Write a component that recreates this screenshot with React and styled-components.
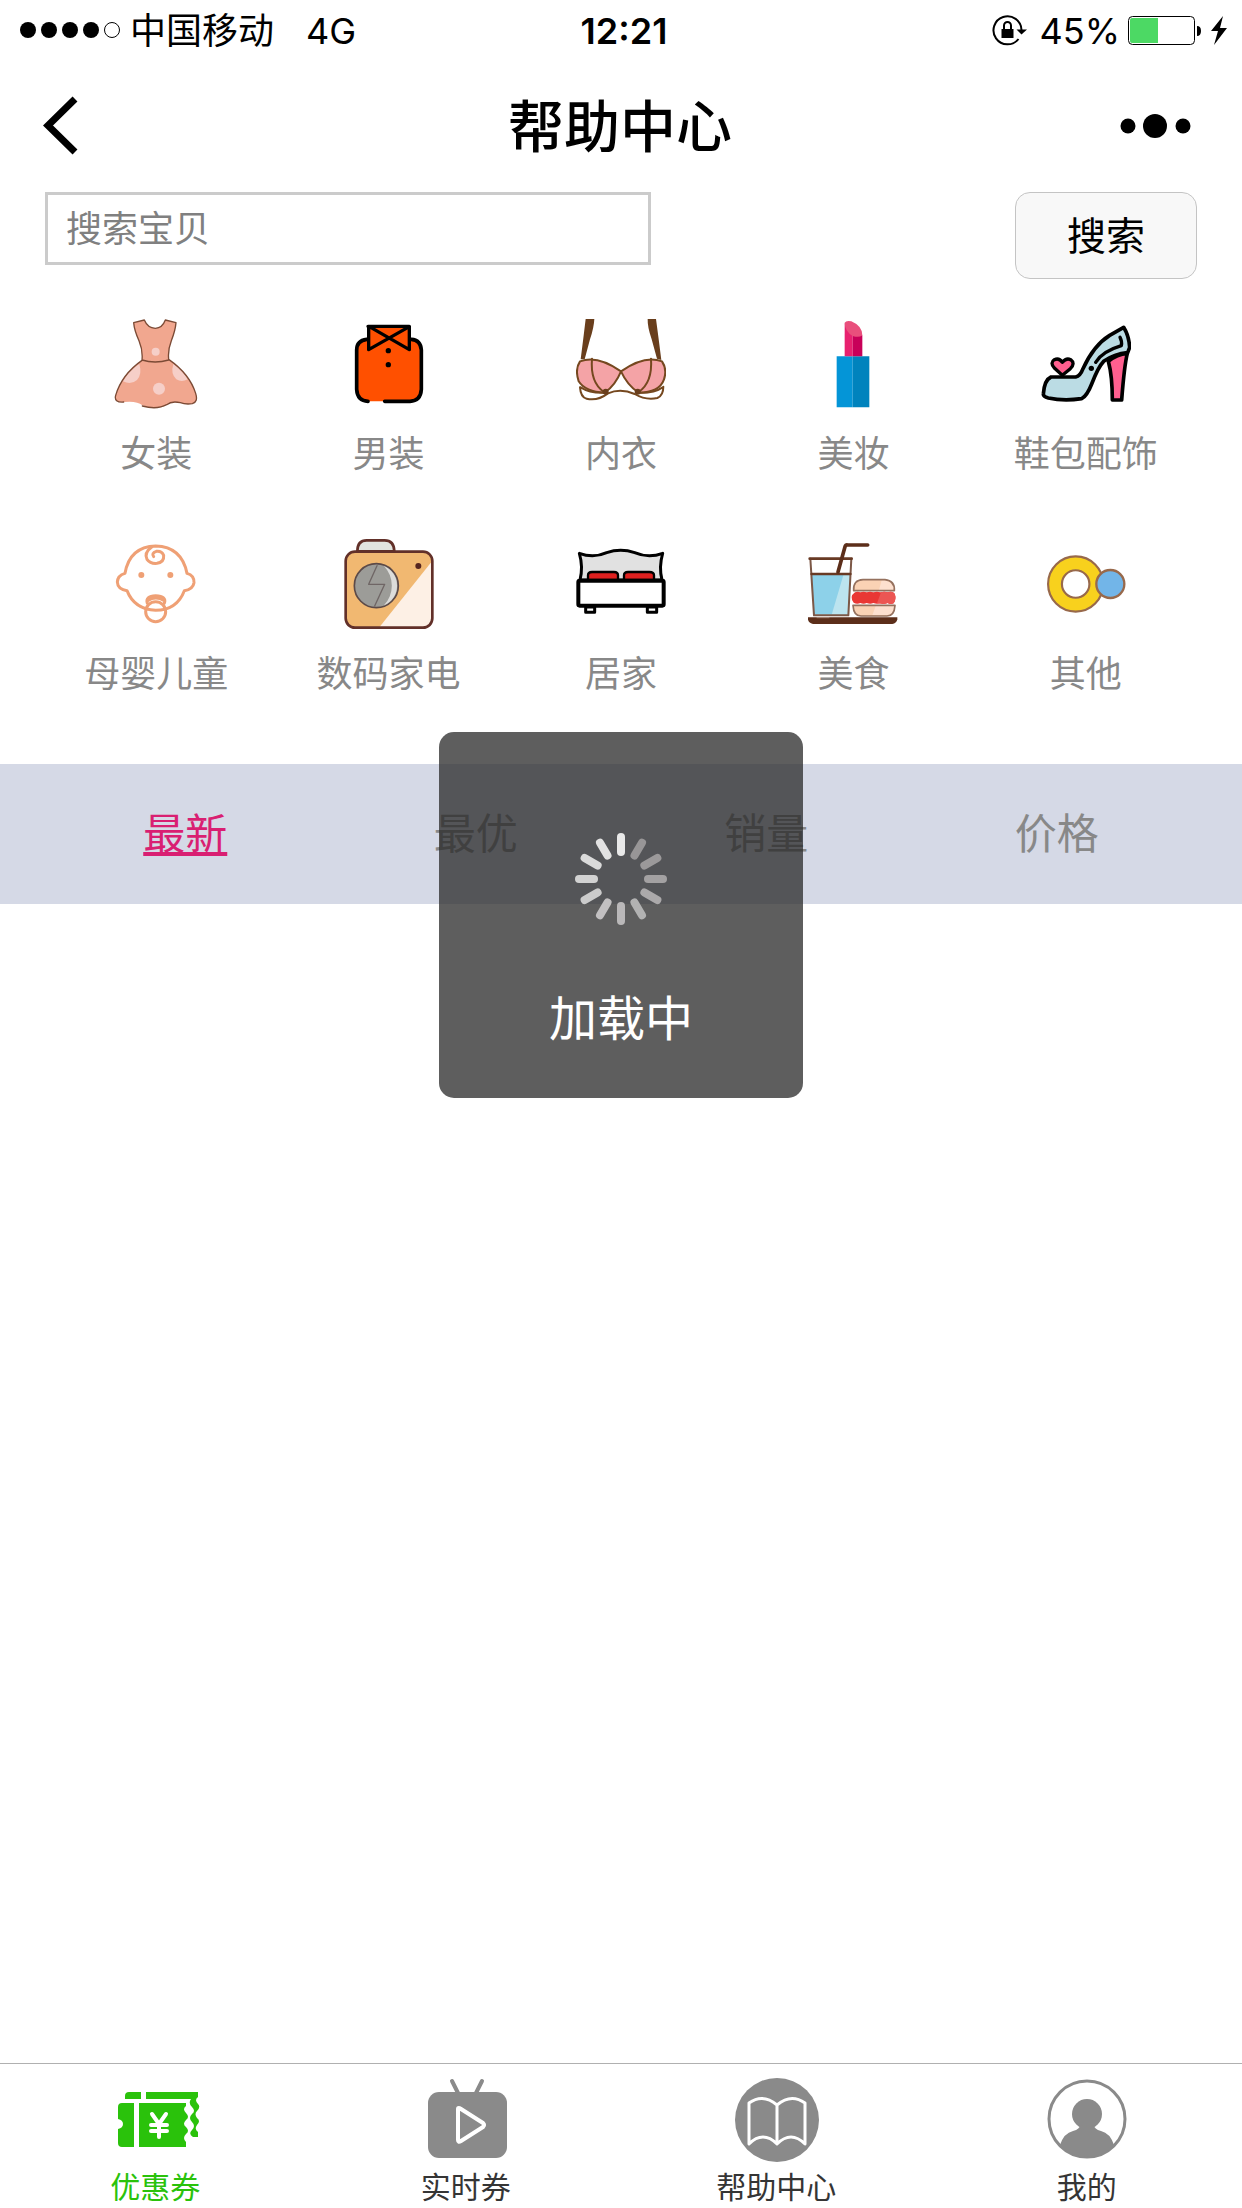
import { useState } from 'react'
import styled, { createGlobalStyle } from 'styled-components'

const GlobalStyle = createGlobalStyle`
  * {
    box-sizing: border-box;
  }
  body {
    margin: 0;
    background: #fff;
    font-family: Inter, "Noto Sans CJK SC", sans-serif;
    font-weight: 400;
    color: #000;
  }
  button, input {
    font-family: inherit;
    font-weight: inherit;
  }
`
const Page = styled.div`
  display: flex;
  flex-direction: column;
  min-height: 100vh;
`
const StatusBar = styled.header`
  display: grid;
  grid-template-columns: 1fr auto 1fr;
  align-items: center;
  height: 62px;
  padding: 0 14px 0 20px;
  font-size: 36px;
  line-height: 60px;
`
const StatusSide = styled.div`
  display: flex;
  align-items: center;
  justify-content: ${({ $end }) => ($end ? 'flex-end' : 'flex-start')};
  gap: 8px;
`
const Carrier = styled.span`
  margin-right: 24px;
`
const Time = styled.time`
  font-weight: 600;
`
const NavBar = styled.nav`
  display: grid;
  grid-template-columns: 1fr auto 1fr;
  align-items: center;
  height: 130px;
  padding: 0 44px 0 42px;
`
const NavButton = styled.button`
  display: flex;
  justify-self: ${({ $end }) => ($end ? 'end' : 'start')};
  padding: 0;
  border: 0;
  background: none;
`
const Title = styled.h1`
  margin: 0;
  font-size: 56px;
  font-weight: 500;
  line-height: 72px;
`
const Main = styled.main`
  position: relative;
  flex: 1;
`
const SearchBar = styled.form`
  display: flex;
  align-items: flex-start;
  justify-content: space-between;
  padding: 0 45px;
`
const SearchInput = styled.input`
  width: 606px;
  height: 73px;
  padding: 0 18px;
  border: 3px solid #cbcbcb;
  background: #fff;
  font-size: 36px;
  &::placeholder {
    color: #808080;
    opacity: 1;
  }
`
const SearchButton = styled.button`
  width: 182px;
  height: 87px;
  padding: 0;
  border: 1px solid #c4c4c4;
  border-radius: 15px;
  background: #f8f8f8;
  color: #000;
  font-size: 39px;
  line-height: 56px;
`
const CategoryGrid = styled.section`
  display: grid;
  grid-template-columns: repeat(5, 1fr);
  padding: 0 40px;
  margin-bottom: 45px;
`
const Category = styled.a`
  display: flex;
  flex-direction: column;
  align-items: center;
  gap: 17px;
  padding: 40px 0 17px;
  color: #888;
  font-size: 36px;
  line-height: 56px;
  text-decoration: none;
`
const SortBar = styled.div`
  display: grid;
  grid-template-columns: repeat(4, 1fr);
  padding: 0 40px;
  background: #d5d9e6;
`
const SortButton = styled.button`
  height: 140px;
  padding: 0;
  border: 0;
  background: none;
  color: ${({ $active }) => ($active ? '#d91f72' : '#888')};
  font-size: 42px;
  line-height: 60px;
  text-decoration: ${({ $active }) => ($active ? 'underline' : 'none')};
`
const Toast = styled.div`
  position: absolute;
  top: 540px;
  left: 50%;
  display: flex;
  flex-direction: column;
  align-items: center;
  gap: 59px;
  width: 364px;
  height: 366px;
  padding-top: 101px;
  border-radius: 15px;
  background: rgba(40, 40, 40, 0.75);
  color: #fff;
  font-size: 48px;
  line-height: 70px;
  transform: translateX(-50%);
`
const TabBar = styled.nav`
  position: sticky;
  bottom: 0;
  display: grid;
  grid-template-columns: repeat(4, 1fr);
  padding-top: 11px;
  border-top: 1px solid #b0b0b0;
  background: #fff;
`
const Tab = styled.a`
  display: flex;
  flex-direction: column;
  align-items: center;
  gap: 1px;
  color: ${({ $active }) => ($active ? '#2ac20b' : '#353535')};
  font-size: 30px;
  line-height: 42px;
  text-decoration: none;
`

const Icon = ({ box, children }) => (
  <svg width="90" height="90" viewBox={box} fill="none" strokeLinecap="round" strokeLinejoin="round" aria-hidden="true">
    {children}
  </svg>
)

const DressIcon = () => (
  <Icon box="94 57 270 270">
    <path
      d="M162 68L194 60Q204 84 227 85Q248 84 257 60L289 68Q287 92 275 122Q264 150 267 178Q330 222 348 280Q356 306 338 311Q318 314 302 308Q276 302 261 314Q232 332 188 316Q172 302 134 306Q100 308 108 286Q126 224 187 181Q190 150 178 122Q164 92 162 68Z"
      fill="#f1a78f"
    />
    <circle cx="228" cy="155" r="12" fill="#f6cfc8" />
    <circle cx="238" cy="266" r="18" fill="#f6cfc8" />
    <path d="M179 192Q188 222 172 240Q154 256 130 244Q148 212 179 192Z" fill="#f6cfc8" />
    <path d="M281 192Q272 222 290 238Q306 248 324 238Q308 210 281 192Z" fill="#f6cfc8" />
    <path
      d="M132 306Q102 308 108 286Q126 224 187 181Q190 150 178 122Q164 92 162 68L194 60Q204 84 227 85Q248 84 257 60L289 68Q287 92 275 122Q264 150 267 178Q330 222 348 280Q356 306 338 311Q318 314 302 308Q276 302 261 314Q232 330 188 318M187 180Q226 192 267 180"
      stroke="#7b4a35"
      strokeWidth="4"
    />
  </Icon>
)

const ShirtIcon = () => (
  <Icon box="792 57 270 270">
    <path d="M861 116H995Q1024 120 1024 148V270Q1022 304 990 304H862Q830 302 830 270V148Q832 120 861 116Z" fill="#ff5000" />
    <path d="M866 80H988V148L925 115L866 148Z" fill="#ff5000" />
    <path d="M860 118Q830 122 830 150V268Q832 302 864 304M914 304H990Q1022 302 1024 268V150Q1022 120 994 118" stroke="#000" strokeWidth="11" />
    <path d="M864 79H988V149L872 82M866 79V149L984 82" stroke="#000" strokeWidth="10" />
    <circle cx="925" cy="152" r="8" fill="#000" />
    <circle cx="925" cy="194" r="8" fill="#000" />
  </Icon>
)

const BraIcon = () => (
  <Icon box="108 57 270 270">
    <path d="M137 57H163Q162 82 150 118L134 178H122Q130 116 137 57ZM323 57H348Q356 116 364 180L351 176L335 118Q322 80 323 57Z" fill="#693e1c" />
    <path
      d="M120 184Q172 164 243 214Q314 164 366 184Q382 208 372 238Q358 278 296 278Q262 256 243 214Q226 256 194 278Q136 276 116 244Q104 208 120 184Z"
      fill="#f4a3a6"
      stroke="#75481f"
      strokeWidth="6"
    />
    <path
      d="M156 176Q150 248 192 276M333 176Q338 248 296 276M120 262Q122 292 140 296Q172 304 204 280Q242 264 284 282Q318 302 352 294Q370 286 370 260M122 262Q150 280 194 278M368 262Q342 280 294 278"
      stroke="#75481f"
      strokeWidth="6"
    />
    <circle cx="197" cy="275" r="9" fill="#693e1c" />
    <circle cx="293" cy="275" r="9" fill="#693e1c" />
  </Icon>
)

const LipstickIcon = () => (
  <Icon box="805 57 270 270">
    <path d="M891 169H939V322H891Z" fill="#0495d7" />
    <path d="M939 169H989V322H939Z" fill="#0083bd" />
    <path d="M915 70L939 100V169H915Z" fill="#e8216f" />
    <path d="M939 100L968 106V169H939Z" fill="#c80059" />
    <path d="M915 68Q920 60 935 64Q968 78 968 106Q958 114 939 108Q916 94 915 68Z" fill="#e94f7c" />
  </Icon>
)

const ShoeIcon = () => (
  <Icon box="182 57 270 270">
    <path
      d="M189 282Q192 240 212 231H286Q300 228 308 206Q340 136 388 106L430 82Q446 108 448 142L442 158Q402 162 370 184Q354 200 334 252Q320 288 304 296Q250 304 204 294Q188 290 189 282Z"
      fill="#bbdce4"
      stroke="#000"
      strokeWidth="11"
    />
    <path d="M384 184Q410 162 441 160Q432 196 424 300H396Q396 228 384 184Z" fill="#ff5f8f" stroke="#000" strokeWidth="11" />
    <path d="M346 187Q366 154 423 137Q426 126 419 112" stroke="#000" strokeWidth="10" />
    <circle cx="333" cy="205" r="8" fill="#000" />
    <path d="M246 226L222 204Q208 188 222 179Q236 172 246 187Q258 172 271 179Q286 190 270 206Z" fill="#ff5f8f" stroke="#000" strokeWidth="10" />
  </Icon>
)

const BabyIcon = () => (
  <Icon box="94 57 270 270">
    <g stroke="#efa075" strokeWidth="9">
      <path d="M136 160Q150 80 228 78Q306 80 322 160Q344 166 343 188Q340 208 314 212Q292 270 228 271Q164 268 142 212Q114 208 113 186Q114 166 136 160Z" />
      <path d="M217 80Q192 98 202 118Q212 132 232 130Q254 126 252 106Q246 92 230 94Q214 100 222 110" />
      <path d="M203 250Q196 228 228 227Q262 228 254 250M204 242Q228 226 254 242" />
      <circle cx="228" cy="275" r="30" />
    </g>
    <circle cx="185" cy="165" r="9" fill="#efa075" />
    <circle cx="272" cy="165" r="9" fill="#efa075" />
  </Icon>
)

const CameraIcon = () => (
  <Icon box="792 57 270 270">
    <path d="M832 94Q832 61 860 61H914Q942 61 943 94Z" fill="#e2e4df" stroke="#623029" strokeWidth="8" />
    <rect x="797" y="95" width="260" height="228" rx="28" fill="#f1b871" />
    <path d="M1056 124V294Q1056 322 1028 322H898Z" fill="#fdf0e5" />
    <rect x="797" y="95" width="260" height="228" rx="28" stroke="#623029" strokeWidth="8" />
    <circle cx="889" cy="197" r="66" fill="#9c9c98" stroke="#5c4a48" strokeWidth="5" />
    <path d="M912 138A64 64 0 0 1 912 256A86 86 0 0 0 912 138Z" fill="#dcdcda" />
    <path d="M891 137L866 193H914L884 258" stroke="#6f6665" strokeWidth="4" />
    <circle cx="1015" cy="138" r="9" fill="#56251f" />
  </Icon>
)

const BedIcon = () => (
  <Icon box="108 57 270 270">
    <path
      d="M118 100Q160 116 200 98Q242 84 284 98Q326 116 368 100Q356 142 366 180H120Q130 140 118 100Z"
      fill="#e1e1e1"
      stroke="#000"
      strokeWidth="9"
    />
    <path d="M144 180V166Q144 156 156 156H222Q234 156 234 166V180ZM252 180V166Q252 156 264 156H328Q342 156 342 166V180Z" fill="#df201f" stroke="#000" strokeWidth="7" />
    <rect x="115" y="182" width="256" height="75" rx="4" fill="#fff" stroke="#000" strokeWidth="12" />
    <path d="M137 261H164V277H137ZM322 261H350V277H322Z" stroke="#000" strokeWidth="9" />
  </Icon>
)

const FoodIcon = () => (
  <Icon box="805 57 270 270">
    <path d="M816 164H931L926 284H823Z" fill="#8dd1e9" />
    <path d="M911 166H931L926 284H876Z" fill="#bce4ef" />
    <path d="M812 116L823 286H926L935 116" stroke="#7c5847" strokeWidth="6" />
    <path d="M810 116H936M816 162H932" stroke="#683a24" strokeWidth="8" />
    <path d="M895 156L916 80Q918 74 924 75H984" stroke="#5c2e1a" strokeWidth="11" />
    <path d="M942 212Q940 180 970 179H1036Q1066 182 1064 212ZM940 256H1066Q1064 288 1042 288H964Q942 288 940 256Z" fill="#fad2b4" />
    <path d="M1026 181Q1064 182 1062 210H1018ZM1008 258H1064Q1062 286 1040 286H998Z" fill="#fde0cf" />
    <path d="M942 212Q940 180 970 179H1036Q1066 182 1064 212ZM940 256H1066Q1064 288 1042 288H964Q942 288 940 256Z" stroke="#95715e" strokeWidth="5" />
    <path d="M946 217Q954 213 962 217Q972 213 981 217Q992 213 1001 217Q1012 213 1022 217Q1034 213 1044 217Q1056 213 1064 220Q1072 236 1062 250Q1052 254 1044 249Q1034 254 1022 249Q1012 254 1001 249Q992 254 981 249Q972 254 962 249Q952 254 942 248Q928 230 946 217Z" fill="#e93734" />
    <path d="M1024 217Q1034 213 1044 217Q1056 213 1064 220Q1072 236 1062 250Q1052 254 1044 249Q1034 254 1012 250Z" fill="#ec5653" />
    <path d="M805 292H1073V298Q1070 311 1058 312H820Q806 309 805 298Z" fill="#5c2e1a" />
    <path d="M832 293H868" stroke="#a98b7c" strokeWidth="3" />
  </Icon>
)

const OtherIcon = () => (
  <Icon box="182 717 270 270">
    <circle cx="286" cy="852" r="62" stroke="#98694b" strokeWidth="48" />
    <circle cx="286" cy="852" r="62" stroke="#f8d11d" strokeWidth="35" />
    <circle cx="390" cy="852" r="42" fill="#72b5e8" stroke="#98694b" strokeWidth="7" />
  </Icon>
)

const CouponIcon = () => (
  <Icon box="0 0 90 90">
    <path d="M19 17H31V24H15V21Q15 17 19 17Z" fill="#2ac20b" />
    <path d="M36 17H88V22Q84 25 88 29Q91 32 87 36Q84 39 87 43Q91 46 87 50Q84 54 88 57V62H83Q78 59 82 55Q86 51 82 47Q78 43 82 39Q86 36 82 32Q78 28 81 24H36Z" fill="#2ac20b" />
    <path d="M12 28H24V72H12Q8 72 8 68V54Q13 53 13 49Q13 45 8 44V32Q8 28 12 28Z" fill="#2ac20b" />
    <path d="M29 28H76V31Q72 34 76 38Q80 42 76 45Q72 49 76 52Q80 56 76 59Q72 63 76 67V72H29Z" fill="#2ac20b" />
    <path d="M42 39L49 49L56 39M49 49V62M41 50H57M41 56H57" stroke="#fff" strokeWidth="4" />
  </Icon>
)

const LiveIcon = () => (
  <Icon box="0 0 90 90">
    <path d="M31 6L37 18M61 6L55 18" stroke="#8a8a8a" strokeWidth="4" />
    <rect x="7" y="17" width="79" height="66" rx="11" fill="#8a8a8a" />
    <path d="M37 34Q37 32 40 34L62 48Q64 50 62 52L40 66Q37 68 37 65Z" stroke="#fff" strokeWidth="4" />
  </Icon>
)

const HelpIcon = () => (
  <Icon box="0 0 90 90">
    <circle cx="46" cy="45" r="42" fill="#8a8a8a" />
    <path d="M18 28Q32 18 46 30Q60 18 74 28V69Q60 55 46 69Q32 55 18 69ZM46 30V68" stroke="#fff" strokeWidth="3" />
  </Icon>
)

const MineIcon = () => (
  <Icon box="0 0 90 90">
    <circle cx="45" cy="44" r="38" stroke="#8a8a8a" strokeWidth="3" />
    <circle cx="45" cy="39" r="15" fill="#8a8a8a" />
    <path d="M38 50H52Q52 54 59 56Q68 58 72 70Q61 82 45 82Q29 82 18 70Q22 58 31 56Q38 54 38 50Z" fill="#8a8a8a" />
  </Icon>
)

const Signal = () => (
  <svg width="102" height="20" viewBox="0 0 102 20" aria-hidden="true">
    {[8, 29, 50, 71].map((x) => <circle key={x} cx={x} cy="9" r="8" />)}
    <circle cx="92" cy="9" r="7.5" fill="none" stroke="#000" />
  </svg>
)

const RotationLock = () => (
  <svg width="40" height="34" viewBox="0 0 40 34" aria-hidden="true">
    <path d="M29.5 16A14 14 0 1 0 26.5 25" fill="none" stroke="#000" strokeWidth="2" />
    <path d="M24.5 15.5H35L29.5 20.5Z" />
    <path d="M9.5 15H21.5V24H9.5Z" />
    <path d="M12 15V11.5A3.5 3.5 0 0 1 19 11.5V15" fill="none" stroke="#000" strokeWidth="2" />
  </svg>
)

const Battery = () => (
  <svg width="100" height="32" viewBox="0 0 100 32" aria-hidden="true">
    <rect x="0.5" y="1.5" width="66" height="28" rx="4" fill="#fff" stroke="#000" />
    <path d="M4 3H30V28H4Q2 28 2 26V5Q2 3 4 3Z" fill="#4cd964" />
    <path d="M69 11Q73 11 73 16Q73 21 69 21Z" />
    <path d="M95 1L83 16H90L86 30L99 13H92Z" />
  </svg>
)

// the top blade is the brightest one
const bladeColors = ['#e9e9e9', '#989697', '#9b999a', '#a3a1a2', '#aba9aa', '#b2b2b2', '#bab8b9', '#c2c0c1', '#cbcbcb', '#d2d2d2', '#dadada', '#e2e2e2']
const Spinner = () => (
  <svg width="92" height="92" viewBox="0 0 92 92" aria-hidden="true">
    {bladeColors.map((color, i) => (
      <rect key={color} x="42" y="0" width="8" height="23" rx="4" fill={color} transform={`rotate(${i * 30} 46 46)`} />
    ))}
  </svg>
)

const categories = [
  { name: '女装', Picture: DressIcon },
  { name: '男装', Picture: ShirtIcon },
  { name: '内衣', Picture: BraIcon },
  { name: '美妆', Picture: LipstickIcon },
  { name: '鞋包配饰', Picture: ShoeIcon },
  { name: '母婴儿童', Picture: BabyIcon },
  { name: '数码家电', Picture: CameraIcon },
  { name: '居家', Picture: BedIcon },
  { name: '美食', Picture: FoodIcon },
  { name: '其他', Picture: OtherIcon }
]
const sorts = ['最新', '最优', '销量', '价格']
const tabs = [
  { name: '优惠券', Picture: CouponIcon },
  { name: '实时券', Picture: LiveIcon },
  { name: '帮助中心', Picture: HelpIcon },
  { name: '我的', Picture: MineIcon }
]

const App = () => {
  const [sort, setSort] = useState('最新')
  const [keyword, setKeyword] = useState('')

  return (
    <Page lang="zh-CN">
      <GlobalStyle />
      <StatusBar>
        <StatusSide>
          <Signal />
          <Carrier>中国移动</Carrier>
          <span>4G</span>
        </StatusSide>
        <Time>12:21</Time>
        <StatusSide $end>
          <RotationLock />
          <span>45%</span>
          <Battery />
        </StatusSide>
      </StatusBar>
      <NavBar>
        <NavButton type="button" aria-label="返回">
          <svg width="36" height="62" viewBox="1 0 36 62" aria-hidden="true">
            <path d="M34 3L7 29.5L34 56" fill="none" stroke="#000" strokeWidth="7" />
          </svg>
        </NavButton>
        <Title>帮助中心</Title>
        <NavButton type="button" aria-label="更多" $end>
          <svg width="78" height="26" viewBox="0 0 78 26" aria-hidden="true">
            <circle cx="8" cy="12" r="7.5" />
            <circle cx="35" cy="12" r="12" />
            <circle cx="63" cy="12" r="7.5" />
          </svg>
        </NavButton>
      </NavBar>
      <Main>
        <SearchBar onSubmit={(e) => e.preventDefault()}>
          <SearchInput
            aria-label="搜索宝贝"
            placeholder="搜索宝贝"
            value={keyword}
            onChange={(e) => setKeyword(e.target.value)}
          />
          <SearchButton type="submit">搜索</SearchButton>
        </SearchBar>
        <CategoryGrid>
          {categories.map(({ name, Picture }) => (
            <Category key={name} href="#">
              <Picture />
              {name}
            </Category>
          ))}
        </CategoryGrid>
        <SortBar>
          {sorts.map((name) => (
            <SortButton key={name} type="button" $active={name === sort} onClick={() => setSort(name)}>
              {name}
            </SortButton>
          ))}
        </SortBar>
        <Toast role="status">
          <Spinner />
          加载中
        </Toast>
      </Main>
      <TabBar>
        {tabs.map(({ name, Picture }, i) => (
          <Tab key={name} href="#" $active={i === 0}>
            <Picture />
            {name}
          </Tab>
        ))}
      </TabBar>
    </Page>
  )
}
export default App
